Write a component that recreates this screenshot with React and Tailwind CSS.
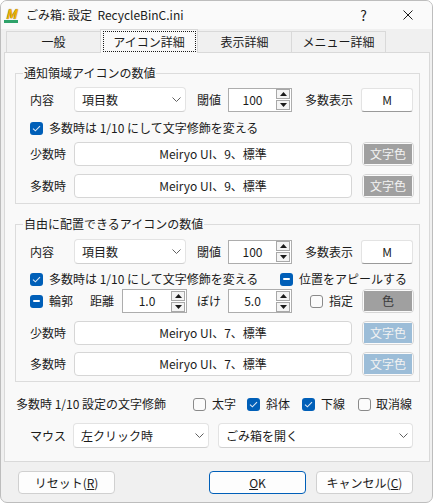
import React from 'react';

const Chevron = () => (
  <svg width="9" height="5" viewBox="0 0 9 5" className="shrink-0">
    <path d="M0.5 0.5 L4.5 4.5 L8.5 0.5" fill="none" stroke="#606060" strokeWidth="1" />
  </svg>
);

const Check = ({ state = 'off' }) => {
  if (state === 'off') {
    return <span className="block w-[13px] h-[13px] rounded-[3px] border border-[#8a8a8a] bg-[#fbfbfb] shrink-0" />;
  }
  return (
    <span className="w-[13px] h-[13px] rounded-[3px] bg-[#005fb8] flex items-center justify-center shrink-0">
      {state === 'on' ? (
        <svg width="9" height="7" viewBox="0 0 9 7">
          <path d="M1 3.6 L3.4 5.8 L8 1.2" fill="none" stroke="#dce8f5" strokeWidth="1.1" />
        </svg>
      ) : (
        <span className="w-[7px] h-[2px] bg-white rounded-[1px]" />
      )}
    </span>
  );
};

const Select = ({ text, className = '' }) => (
  <div className={`h-[25px] bg-white border border-[#e3e3e3] border-b-[#d0d0d0] rounded-[4px] flex items-center justify-between pl-[7px] pr-[4px] ${className}`}>
    <span>{text}</span>
    <Chevron />
  </div>
);

const Arrow = ({ up }) => (
  <svg width="7" height="4" viewBox="0 0 7 4">
    <path d={up ? 'M0 4 L3.5 0 L7 4 Z' : 'M0 0 L3.5 4 L7 0 Z'} fill="#1a1a1a" />
  </svg>
);

const Spin = ({ value, className = 'w-[64px]' }) => (
  <div className={`h-[24px] border border-[#adadad] bg-white flex items-center ${className}`}>
    <span className="flex-1 text-center">{value}</span>
    <div className="flex flex-col gap-[1px] mr-[1px]">
      <span className="w-[14px] h-[10px] border border-[#a8a8a8] bg-[#f4f4f4] flex items-center justify-center"><Arrow up /></span>
      <span className="w-[14px] h-[10px] border border-[#a8a8a8] bg-[#f4f4f4] flex items-center justify-center"><Arrow /></span>
    </div>
  </div>
);

const MBox = () => (
  <div className="w-[52px] h-[24px] bg-white border border-[#e3e3e3] border-b-[#9a9a9a] rounded-[3px] flex items-center justify-center">M</div>
);

const FontBtn = ({ text }) => (
  <div className="w-[278px] h-[24px] bg-white border border-[#d6d6d6] rounded-[4px] flex items-center justify-center">{text}</div>
);

const ColorBtn = ({ label, fill, dark }) => (
  <div className="w-[52px] h-[24px] bg-[#fbfbfb] border border-[#d6d6d6] rounded-[4px] p-[1px] ml-auto">
    <div className={`w-full h-full flex items-center justify-center ${fill} ${dark ? 'text-[#3a3a3a]' : 'text-[#f2f2f2]'}`}>{label}</div>
  </div>
);

const Group = ({ title, children, className = '' }) => (
  <div className={`relative w-[405px] border border-[#dcdcdc] pl-[14px] pr-[5px] pb-[5px] ${className}`}>
    <span className="absolute top-[-9px] left-[7px] px-[1px] bg-[#f9f9f9]">{title}</span>
    {children}
  </div>
);

const FirstRow = () => (
  <div className="flex items-center h-[25px]">
    <span className="w-[44px]">内容</span>
    <Select text="項目数" className="w-[112px]" />
    <span className="ml-[11px] w-[31px]">閾値</span>
    <Spin value="100" />
    <span className="ml-[13px] w-[56px]">多数表示</span>
    <MBox />
  </div>
);

const FontRow = ({ label, size, fill }) => (
  <div className="flex items-center h-[24px]">
    <span className="w-[44px]">{label}</span>
    <FontBtn text={`Meiryo UI、${size}、標準`} />
    <ColorBtn label="文字色" fill={fill} />
  </div>
);

const Btn = ({ children, ok }) => (
  <div className={`w-[97px] h-[23px] rounded-[4px] bg-[#fdfdfd] border flex items-center justify-center ${ok ? 'border-[#005fb8]' : 'border-[#d0d0d0]'}`}>
    {children}
  </div>
);

export default function App() {
  const tabs = ['一般', 'アイコン詳細', '表示詳細', 'メニュー詳細'];
  return (
    <div className="w-[433px] h-[503px] bg-[#f0f0f0] border border-[#bdbdbd] rounded-[7px] overflow-hidden flex flex-col font-['Noto_Sans_CJK_JP',sans-serif] text-[12px] leading-[16px] text-[#1b1b1b]">
      {/* title bar */}
      <div className="h-[28px] bg-[#fafafa] flex items-center pl-[3px] shrink-0">
        <span className="w-[14px] h-[15px] flex flex-col items-center">
          <span className="h-[11px] text-[13px] leading-[12px] font-bold italic text-[#f2b400] [text-shadow:0_0_1px_#5a3a00]">M</span>
          <span className="w-[14px] h-[3px] bg-[#2fa36b] mt-[1px]" />
        </span>
        <span className="ml-[8px] whitespace-pre">ごみ箱: 設定  RecycleBinC.ini</span>
        <span className="ml-auto text-[14px] mr-[36px]">?</span>
        <svg width="10" height="10" viewBox="0 0 10 10" className="mr-[19px]">
          <path d="M0.5 0.5 L9.5 9.5 M9.5 0.5 L0.5 9.5" stroke="#1b1b1b" strokeWidth="1" />
        </svg>
      </div>

      {/* tabs */}
      <div className="flex items-end pl-[5px] shrink-0">
        {tabs.map((t, i) =>
          i === 1 ? (
            <div key={t} className="relative z-10 w-[98px] h-[24px] -mb-[1px] -ml-[1px] bg-[#f9f9f9] border border-b-0 border-[#d9d9d9] flex justify-center pt-[1px]">
              <div className="w-[93px] h-[21px] border border-dotted border-[#1b1b1b] flex items-center justify-center">{t}</div>
            </div>
          ) : (
            <div key={t} className={`w-[95px] h-[21px] bg-[#f0f0f0] border border-b-0 border-[#d9d9d9] flex items-center justify-center ${i > 1 ? '-ml-[1px]' : ''}`}>
              {t}
            </div>
          )
        )}
      </div>

      {/* panel */}
      <div className="ml-[3px] w-[426px] bg-[#f9f9f9] border border-[#d9d9d9] pt-[20px] pl-[10px] pb-[13px]">
        <Group title="通知領域アイコンの数値" className="pt-[13px]">
          <FirstRow />
          <div className="flex items-center h-[16px] mt-[8px]">
            <Check state="on" />
            <span className="ml-[6px]">多数時は 1/10 にして文字修飾を変える</span>
          </div>
          <div className="mt-[6px]"><FontRow label="少数時" size="9" fill="bg-[#a0a0a0]" /></div>
          <div className="mt-[8px]"><FontRow label="多数時" size="9" fill="bg-[#a0a0a0]" /></div>
        </Group>

        <Group title="自由に配置できるアイコンの数値" className="mt-[20px] pt-[14px]">
          <FirstRow />
          <div className="flex items-center h-[16px] mt-[7px]">
            <div className="w-[250px] flex items-center">
              <Check state="on" />
              <span className="ml-[6px]">多数時は 1/10 にして文字修飾を変える</span>
            </div>
            <Check state="mixed" />
            <span className="ml-[6px]">位置をアピールする</span>
          </div>
          <div className="flex items-center h-[24px] mt-[2px]">
            <Check state="mixed" />
            <span className="ml-[6px] w-[24px]">輪郭</span>
            <span className="ml-[17px] w-[32px]">距離</span>
            <Spin value="1.0" className="w-[65px]" />
            <span className="ml-[10px] w-[31px]">ぼけ</span>
            <Spin value="5.0" />
            <span className="ml-[18px] flex"><Check /></span>
            <span className="ml-[6px]">指定</span>
            <ColorBtn label="色" fill="bg-[#a0a0a0]" dark />
          </div>
          <div className="mt-[8px]"><FontRow label="少数時" size="7" fill="bg-[#9cbdd8]" /></div>
          <div className="mt-[7px]"><FontRow label="多数時" size="7" fill="bg-[#9cbdd8]" /></div>
        </Group>

        <div className="flex items-center h-[16px] mt-[14px] pl-[1px]">
          <span className="w-[177px]">多数時 1/10 設定の文字修飾</span>
          <div className="w-[54px] flex items-center"><Check /><span className="ml-[6px]">太字</span></div>
          <div className="w-[55px] flex items-center"><Check state="on" /><span className="ml-[6px]">斜体</span></div>
          <div className="w-[56px] flex items-center"><Check state="on" /><span className="ml-[6px]">下線</span></div>
          <div className="flex items-center"><Check /><span className="ml-[5px]">取消線</span></div>
        </div>

        <div className="flex items-center h-[25px] mt-[11px] pl-[15px]">
          <span className="w-[43px]">マウス</span>
          <Select text="左クリック時" className="w-[136px]" />
          <Select text="ごみ箱を開く" className="ml-[9px] w-[195px]" />
        </div>
      </div>

      {/* buttons */}
      <div className="flex items-center mt-[9px] pl-[17px]">
        <Btn>リセット(<span className="underline">R</span>)</Btn>
        <span className="ml-[94px]"><Btn ok><span className="underline">O</span>K</Btn></span>
        <span className="ml-[10px]"><Btn>キャンセル(<span className="underline">C</span>)</Btn></span>
      </div>
    </div>
  );
}
